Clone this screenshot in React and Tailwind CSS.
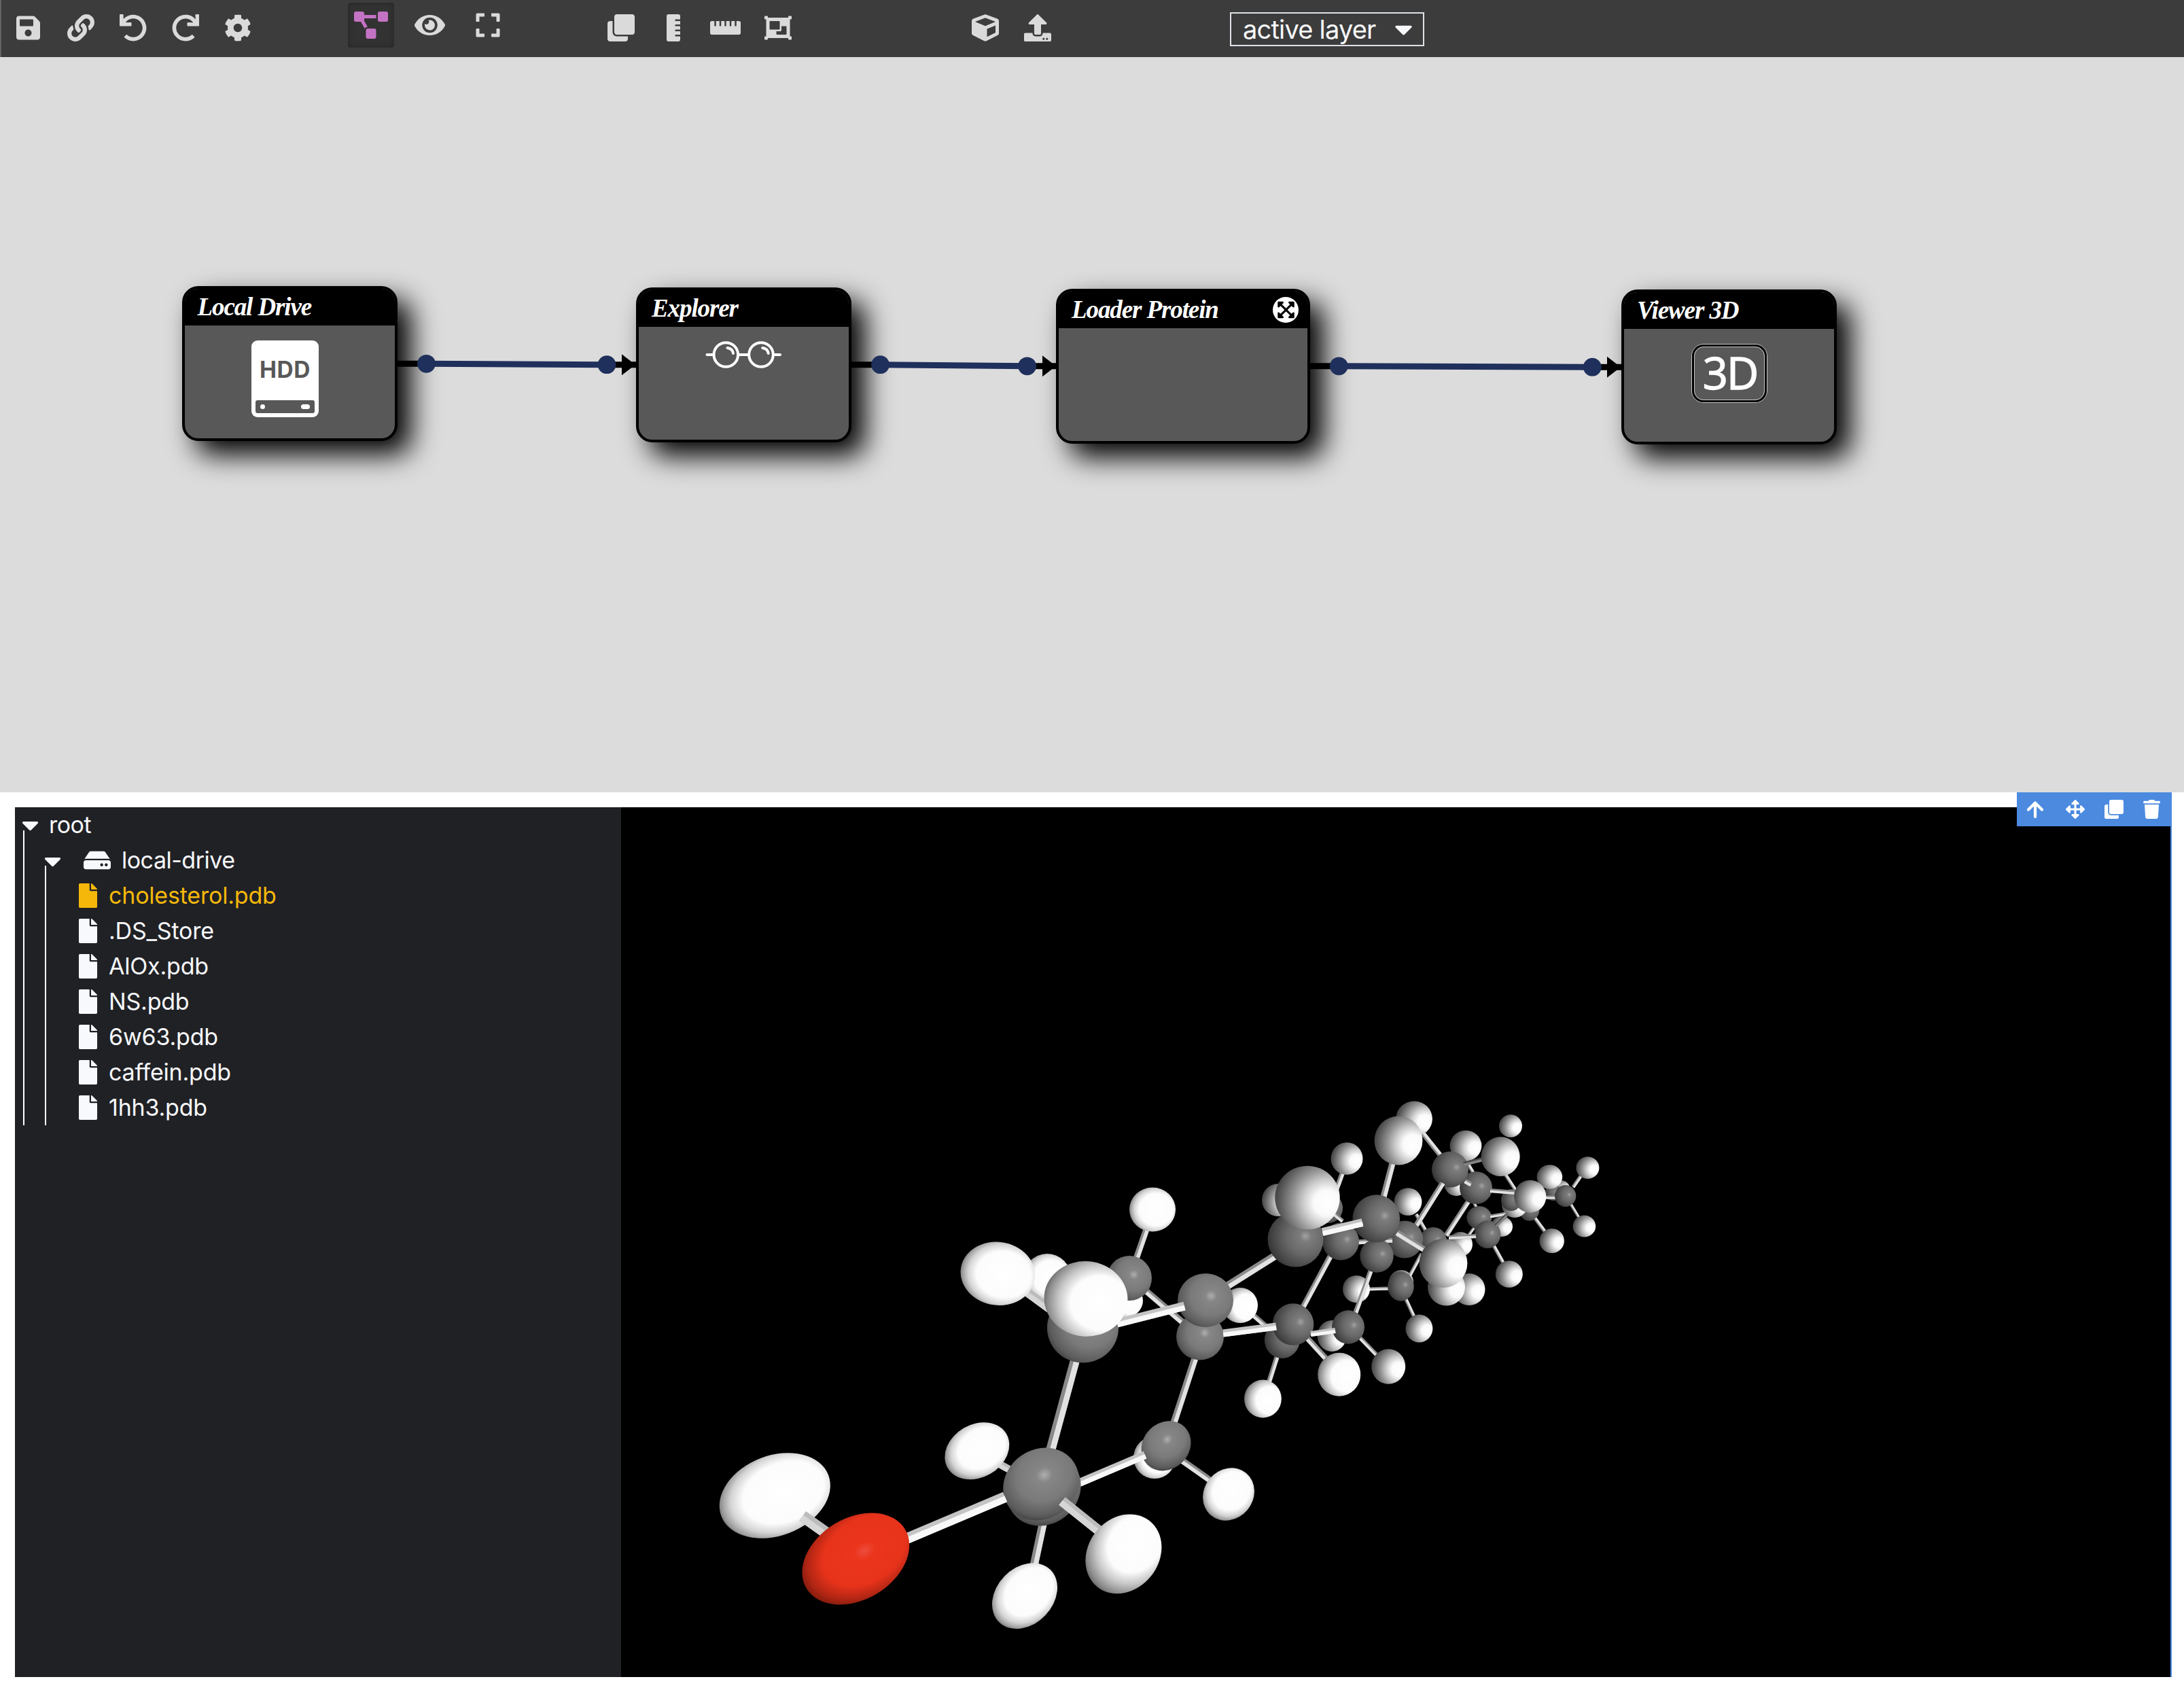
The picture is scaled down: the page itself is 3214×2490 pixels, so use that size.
import React from "react";
import {
  FaSave, FaLink, FaUndo, FaRedo, FaCog, FaProjectDiagram, FaEye, FaExpand, FaClone,
  FaRulerVertical, FaRulerHorizontal, FaObjectGroup, FaCube, FaUpload, FaCaretDown,
  FaHdd, FaFile, FaArrowsAlt, FaTrash, FaExpandArrowsAlt,
} from "react-icons/fa";

function Toolbar() {
  return (
    <header className="flex h-[84px] items-center border-l-2 border-[#626262] bg-[#3c3c3c] pb-[2px] text-[#dadada]">
      <FaSave className="ml-[22px] h-[40px] w-[35px]" />
      <FaLink className="ml-[40px] size-[40px]" />
      <FaUndo className="ml-[37px] size-[40px]" />
      <FaRedo className="ml-[37px] size-[40px]" />
      <FaCog className="ml-[37px] size-[40px]" />
      <div className="ml-[142px] flex items-center pb-[8px]">
        <div className="flex h-[66px] w-[68px] items-center justify-center rounded-[4px] bg-[#323232] shadow-[inset_0_0_8px_rgba(0,0,0,0.25)]">
          <FaProjectDiagram className="h-[40px] w-[50px] text-[#c472c4]" />
        </div>
        <FaEye className="ml-[30px] h-[40px] w-[45px]" />
        <FaExpand className="ml-[45px] h-[40px] w-[36px]" />
      </div>
      <FaClone className="ml-[158px] size-[40px]" />
      <FaRulerVertical className="ml-[47px] h-[40px] w-[20px]" />
      <FaRulerHorizontal className="ml-[44px] h-[40px] w-[45px]" />
      <FaObjectGroup className="ml-[35px] size-[40px]" />
      <FaCube className="ml-[265px] size-[40px]" />
      <FaUpload className="ml-[37px] size-[40px]" />
      <div className="mt-[4px] ml-[263px] flex h-[50px] w-[286px] items-center justify-between border-2 border-[#dee2e6] pr-[15px] pl-[17px] text-[#f8f9fa]">
        <span className="font-[Inter,sans-serif] text-[38px] leading-[46px] tracking-[-0.8px] whitespace-nowrap">active layer</span>
        <FaCaretDown className="h-[42px] w-[27px]" />
      </div>
    </header>
  );
}

function Node({ className, title, badge, children }) {
  return (
    <div className={`absolute h-[228px] overflow-visible rounded-[24px] border-4 border-black bg-[#585858] shadow-[20px_20px_40px_#000] ${className}`}>
      <div className="flex h-[54px] items-center justify-between rounded-t-[20px] bg-black pr-[13px] pl-[19px]">
        <span className="font-['Liberation_Serif',serif] text-[37px] leading-[50px] font-bold tracking-[-1.1px] whitespace-nowrap text-white italic">{title}</span>
        {badge}
      </div>
      <div className="flex justify-center">{children}</div>
    </div>
  );
}

const links = [
  { from: 584, a: 627.5, b: 893, to: 937, ya: 535.3, yb: 536.7 },
  { from: 1252, a: 1295.5, b: 1511.6, to: 1556, ya: 536.7, yb: 538.8 },
  { from: 1927, a: 1970.3, b: 2343.3, to: 2387, ya: 538.8, yb: 540.2 },
];

function Links() {
  return (
    <svg className="absolute inset-0" width="3214" height="1082" viewBox="0 84 3214 1082">
      {links.map((l) => (
        <g key={l.from}>
          <path d={`M${l.from} ${l.ya}H${l.a}M${l.b} ${l.yb}H${l.to}`} stroke="#000" strokeWidth="9" />
          <path d={`M${l.to - 22} ${l.yb - 15.5}v31L${l.to - 2} ${l.yb}z`} fill="#000" />
          <path d={`M${l.a} ${l.ya}L${l.b} ${l.yb}`} stroke="#1f305c" strokeWidth="9" />
          <circle cx={l.a} cy={l.ya} r="13.4" fill="#1f305c" />
          <circle cx={l.b} cy={l.yb} r="13.4" fill="#1f305c" />
        </g>
      ))}
    </svg>
  );
}

function Workflow() {
  return (
    <section className="relative h-[1082px] overflow-hidden bg-[#dcdcdc]">
      <Node className="top-[337px] left-[267.500px] w-[317px]" title="Local Drive">
        <div className="mt-[22px] mr-[13px] flex h-[113px] w-[99px] flex-col items-center justify-between rounded-[9px] bg-white pt-[24px] pb-[6px]">
          <span className="font-[Inter,sans-serif] text-[33.5px] leading-[38px] font-bold tracking-[0.6px] text-[#585858]">HDD</span>
          <div className="flex h-[19px] w-[87px] items-center justify-between rounded-[3px] bg-[#585858] px-[7px]">
            <i className="size-[7px] rounded-full bg-white" />
            <i className="h-[7px] w-[13px] rounded-full bg-white" />
          </div>
        </div>
      </Node>
      <Node className="top-[338.500px] left-[936px] w-[317px]" title="Explorer">
        <svg className="mt-[19px]" width="114" height="44" viewBox="1038 501 114 44" fill="none" stroke="#fff" strokeWidth="4" strokeLinecap="round">
          <circle cx="1068.3" cy="523" r="17.8" />
          <circle cx="1120" cy="523" r="17.8" />
          <path d="M1040.500 523H1050M1087 523H1102M1138 523H1148" />
          <path d="M1070.500 513Q1078 514 1079 521M1122.200 513Q1129.700 514 1130.700 521" />
        </svg>
      </Node>
      <Node
        className="top-[341px] left-[1554px] w-[374px]"
        title="Loader Protein"
        badge={
          <span className="flex size-[38px] items-center justify-center rounded-full bg-white text-black">
            <FaExpandArrowsAlt className="h-[28px] w-[25px]" />
          </span>
        }
      />
      <Node className="top-[342px] left-[2386px] w-[317px]" title="Viewer 3D">
        <div className="mt-[22px] flex h-[87px] w-[112px] rounded-[18px] border border-[#c8c8c8]">
          <div className="flex flex-1 rounded-[17px] border-[3px] border-black">
            <div className="flex flex-1 items-center justify-center rounded-[14px] border border-[#c8c8c8] pb-[4px] pl-[3px]">
              <span className="font-['Open_Sans',sans-serif] text-[65px] leading-[76px] tracking-[-2px] text-white [-webkit-text-stroke:1.4px_white]">3D</span>
            </div>
          </div>
        </div>
      </Node>
      <Links />
    </section>
  );
}

const files = ["cholesterol.pdb", ".DS_Store", "AlOx.pdb", "NS.pdb", "6w63.pdb", "caffein.pdb", "1hh3.pdb"];

function Explorer() {
  return (
    <aside className="w-[892px] bg-[#202125] pl-[12px] font-[Inter,sans-serif] text-[34px] leading-[52px] tracking-[-0.2px] text-[#f8f9fc]">
      <div className="flex h-[52px] items-center">
        <FaCaretDown className="-mt-[1px] -ml-[2px] h-[40px] w-[25px]" />
        <span className="ml-[15px] tracking-[-0.5px]">root</span>
      </div>
      <div className="-mt-[18px] border-l-2 border-white pt-[18px] pl-[30px]">
        <div className="flex h-[52px] items-center">
          <FaCaretDown className="mt-[2px] -ml-[1px] h-[40px] w-[25px]" />
          <FaHdd className="ml-[33px] h-[36px] w-[40px]" />
          <span className="ml-[16px] tracking-[-0.5px]">local-drive</span>
        </div>
        <div className="-mt-[18px] border-l-2 border-white pt-[18px] pl-[48px]">
          {files.map((name) => (
            <div key={name} className={`flex h-[52px] items-center ${name === "cholesterol.pdb" ? "text-[#f5b80a]" : ""}`}>
              <FaFile className="h-[36px] w-[27px]" />
              <span className="ml-[17px]">{name}</span>
            </div>
          ))}
        </div>
      </div>
    </aside>
  );
}

// Scene items, listed from the farthest to the nearest.
// Atoms: [kind, cx, cy, rx, ry, tilt]; bonds: ["b", x1, y1, x2, y2, width, shade].
const scene = [
  ["h", 2297, 1749, 13, 12],
  ["c", 2286, 1755, 12, 12],
  ["b", 2275, 1762, 2295, 1762, 5],
  ["c", 2303.7, 1760, 15.6, 16],
  ["b", 2315, 1747, 2328, 1728, 5],
  ["b", 2312, 1773, 2326, 1796, 4],
  ["h", 2336.4, 1718.5, 17, 16.3],
  ["h", 2331.4, 1804.5, 16.8, 16],
  ["h", 2280.4, 1732, 18.8, 17.8],
  ["c", 2250.5, 1780, 15, 16.7],
  ["b", 2259, 1793, 2276, 1816, 5],
  ["h", 2283.7, 1826, 18.2, 18],
  ["h", 2223, 1657, 17, 16.7],
  ["h", 2210, 1805, 16, 15],
  ["h", 2229, 1773, 19, 19],
  ["c", 2224, 1766, 15, 16],
  ["b", 2213, 1725, 2230, 1751, 5],
  ["b", 2169, 1807, 2158, 1822, 4],
  ["h", 2149, 1831, 18, 18],
  ["b", 2167, 1766, 2174, 1780, 4],
  ["c", 2176.8, 1792, 18.4, 17],
  ["b", 2193, 1790, 2216, 1786, 5],
  ["b", 2198, 1833, 2213, 1860, 5],
  ["h", 2220.8, 1875, 20, 19.8],
  ["c", 2189, 1816.6, 19.3, 20.5],
  ["b", 2201, 1804, 2217, 1788, 5, "dim"],
  ["b", 2084, 1787, 2098, 1811, 5],
  ["h", 2072, 1768.5, 20.4, 20.3],
  ["c", 2109, 1826, 20, 20],
  ["b", 2128, 1818, 2162, 1766, 7],
  ["b", 2132, 1821, 2172, 1819, 6],
  ["h", 2143, 1741, 18, 19],
  ["h", 2157, 1686, 23.4, 22.5],
  ["b", 2158, 1709, 2168, 1726, 5],
  ["c", 2172, 1748, 24, 24],
  ["b", 2193, 1752, 2230, 1755, 6],
  ["h", 2251.7, 1760.7, 23.7, 24],
  ["h", 2081, 1646.5, 26.9, 26],
  ["b", 2094, 1668, 2121, 1702, 7],
  ["c", 2134, 1721, 27, 26.6],
  ["b", 2156, 1738, 2165, 1743, 7],
  ["b", 2154, 1713, 2182, 1706, 6, "dim"],
  ["h", 2208.2, 1702, 28.5, 29],
  ["h", 2162, 1897.6, 23.5, 23.5],
  ["h", 2062, 1887, 18, 18],
  ["b", 2073, 1880, 2092, 1845, 5],
  ["b", 2010, 1897, 2045, 1896, 5],
  ["h", 1996, 1897, 20, 20],
  ["b", 2068, 1910, 2081, 1938, 5],
  ["c", 2061.4, 1893, 19.3, 21.7],
  ["h", 2088.4, 1955, 20, 20.5],
  ["b", 2081, 1808, 2123, 1741, 8],
  ["c", 2067, 1824, 27.3, 27.5],
  ["b", 1995, 1828, 2049, 1825, 7],
  ["b", 1994, 1934, 2020, 1862, 7],
  ["c", 2026, 1848, 24.7, 24.7],
  ["h", 2128.5, 1894, 27.5, 27.5],
  ["b", 2000, 1967, 2028, 1996, 6],
  ["h", 2043.2, 2011, 25, 25.7],
  ["h", 1960, 1966, 21.5, 23],
  ["c", 1984, 1953, 24, 24.7],
  ["h", 1881, 1766, 24, 24],
  ["b", 1977, 1722, 1966, 1752, 7],
  ["h", 1982, 1705, 23.5, 23.7],
  ["c", 1955, 1778, 21, 22],
  ["b", 1964, 1787, 1976, 1797, 6],
  ["b", 1916, 1926, 1958, 1848, 8],
  ["c", 1973, 1827, 27, 27.5],
  ["b", 2035, 1765, 2050, 1708, 9],
  ["h", 2058, 1678.5, 35.4, 36],
  ["c", 2025.3, 1793.3, 34.8, 35],
  ["b", 2056, 1814, 2098, 1840, 9],
  ["h", 2124, 1859, 35.4, 35.9],
  ["h", 1912, 1759, 34, 36],
  ["b", 1805, 1893, 1878, 1847, 11],
  ["c", 1906.5, 1824, 41, 40.5],
  ["b", 1946, 1813, 2005, 1799, 12, "top"],
  ["h", 1924, 1762.5, 47.7, 46.8],
  ["b", 1844, 1935, 1866, 1954, 7],
  ["b", 1880, 1994, 1866, 2038, 7],
  ["m", 1858.4, 2058.5, 27.4, 28],
  ["c", 1886.8, 1972, 26, 27],
  ["b", 1922, 1967, 1953, 2001, 8],
  ["m", 1970.7, 2022.7, 31.5, 32],
  ["c", 1903, 1949, 30.3, 30.8],
  ["b", 1929, 1963, 1965, 1958, 8, "top"],
  ["m", 1825, 1921, 26, 26],
  ["m", 1655, 1914, 27, 25],
  ["b", 1671, 1855, 1688, 1806, 9],
  ["H", 1696, 1780, 34, 32.5],
  ["b", 1680, 1894, 1742, 1947, 9],
  ["C", 1662, 1881, 33, 33],
  ["b", 1726, 2098, 1760, 1994, 10],
  ["C", 1766, 1967, 35, 34.5],
  ["b", 1800, 1962, 1878, 1952, 11, "top"],
  ["C", 1774, 1913.5, 41, 39.5],
  ["H", 1541, 1880, 35, 35],
  ["b", 1500, 1893, 1545, 1926, 13, "flat"],
  ["H", 1468.4, 1874.3, 55, 46.5, 8],
  ["b", 1545, 2138, 1583, 1998, 14],
  ["C", 1593.5, 1954, 52.6, 51.5],
  ["b", 1644, 1947, 1743, 1922, 13, "top"],
  ["m", 1598, 1911.4, 61.5, 55.3, 5],
  ["H", 1699, 2145, 31, 31],
  ["b", 1738, 2148, 1782, 2179, 9],
  ["C", 1716, 2127.8, 39, 34, -45],
  ["H", 1808, 2199, 40.5, 36, -50],
  ["b", 1586, 2183, 1685, 2141, 12, "top"],
  ["b", 1468, 2153, 1492, 2166, 11, "flat"],
  ["H", 1437.8, 2135.3, 50, 39, -30],
  ["b", 1536, 2236, 1521, 2306, 12],
  ["H", 1508, 2348.6, 54, 41.7, -46],
  ["C", 1536, 2192, 57, 51, -40],
  ["C", 1532, 2184, 58, 51, -35],
  ["b", 1330, 2266, 1479, 2203, 16, "top"],
  ["b", 1563, 2209, 1618, 2253, 15, "flat"],
  ["m", 1653.4, 2286.8, 62, 52, -52],
  ["H", 1140.3, 2201, 84.4, 59, -21],
  ["b", 1181, 2231, 1222, 2260, 17, "flat"],
  ["O", 1259.3, 2294, 84.7, 60, -31],
];

const bondTones = {
  lit: ["#8a8a8a", "#e2e2e2"],
  top: ["#c4c4c4", "#f8f8f8"],
  dim: ["#4c4c4c", "#858585"],
  flat: ["#bcbcbc", "#d6d6d6"],
};

function Bond({ x1, y1, x2, y2, width, tone }) {
  const [base, light] = bondTones[tone];
  const len = Math.hypot(x2 - x1, y2 - y1);
  let nx = -(y2 - y1) / len;
  let ny = (x2 - x1) / len;
  if (nx + ny * 1.2 < 0) {
    nx = -nx;
    ny = -ny;
  }
  const o = width * 0.2;
  return (
    <>
      <path d={`M${x1} ${y1}L${x2} ${y2}`} stroke={base} strokeWidth={width} />
      <path d={`M${x1 + nx * o} ${y1 + ny * o}L${x2 + nx * o} ${y2 + ny * o}`} stroke={light} strokeWidth={width * 0.6} />
    </>
  );
}

function Gradient({ id, cx, cy, r, stops }) {
  return (
    <radialGradient id={id} cx={cx} cy={cy} r={r}>
      {stops.map(([offset, color]) => (
        <stop key={offset} offset={offset} stopColor={color} />
      ))}
    </radialGradient>
  );
}

function Molecule() {
  return (
    <svg className="block" width="2280" height="1280" viewBox="914 1188 2280 1280">
      <defs>
        <Gradient id="h" cx="0.8" cy="0.58" r="0.84" stops={[[0, "#fff"], [0.24, "#fafafa"], [0.42, "#cfcfcf"], [0.62, "#969696"], [0.85, "#5c5c5c"], [1, "#3a3a3a"]]} />
        <Gradient id="m" cx="0.68" cy="0.54" r="0.72" stops={[[0, "#fff"], [0.5, "#fcfcfc"], [0.7, "#c8c8c8"], [0.88, "#8c8c8c"], [1, "#585858"]]} />
        <Gradient id="H" cx="0.58" cy="0.5" r="0.61" stops={[[0, "#fff"], [0.6, "#fcfcfc"], [0.78, "#d4d4d4"], [0.9, "#a0a0a0"], [1, "#606060"]]} />
        <Gradient id="c" cx="0.68" cy="0.44" r="0.74" stops={[[0, "#a2a2a2"], [0.14, "#7c7c7c"], [0.45, "#686868"], [0.8, "#444"], [1, "#2c2c2c"]]} />
        <Gradient id="C" cx="0.6" cy="0.42" r="0.66" stops={[[0, "#aeaeae"], [0.16, "#868686"], [0.55, "#7a7a7a"], [0.85, "#5c5c5c"], [1, "#3c3c3c"]]} />
        <Gradient id="O" cx="0.6" cy="0.47" r="0.62" stops={[[0, "#ed4c3e"], [0.16, "#eb361d"], [0.62, "#e8331b"], [0.85, "#b32614"], [1, "#7c1a0d"]]} />
      </defs>
      {scene.map(([kind, a, b, c, d, e = 0, tone = "lit"], i) =>
        kind === "b" ? (
          <Bond key={i} x1={a} y1={b} x2={c} y2={d} width={e} tone={tone} />
        ) : (
          <ellipse key={i} rx={c} ry={d} fill={`url(#${kind})`} transform={`translate(${a} ${b}) rotate(${e})`} />
        )
      )}
    </svg>
  );
}

function Viewer() {
  return (
    <div className="relative w-[2282px] border-r-2 border-[#4b8adf] bg-black">
      <Molecule />
      <div className="absolute -top-[22px] -right-[2px] flex h-[50px] w-[228px] items-center bg-[#4b8adf] text-white">
        <svg className="ml-[14px]" width="26" height="28" viewBox="0 0 26 28" fill="none" stroke="#fff" strokeWidth="4.200" strokeLinecap="round" strokeLinejoin="round">
          <path d="M13 25V5M3 14.500L13 4.500L23 14.500" />
        </svg>
        <FaArrowsAlt className="ml-[32px] size-[28px]" />
        <FaClone className="ml-[29px] size-[28px]" />
        <FaTrash className="ml-[29px] h-[28px] w-[25px]" />
      </div>
    </div>
  );
}

export default function App() {
  return (
    <div className="h-[2490px] w-[3214px] overflow-hidden bg-white">
      <Toolbar />
      <Workflow />
      <main className="mt-[22px] ml-[22px] flex h-[1280px] w-[3174px]">
        <Explorer />
        <Viewer />
      </main>
    </div>
  );
}
